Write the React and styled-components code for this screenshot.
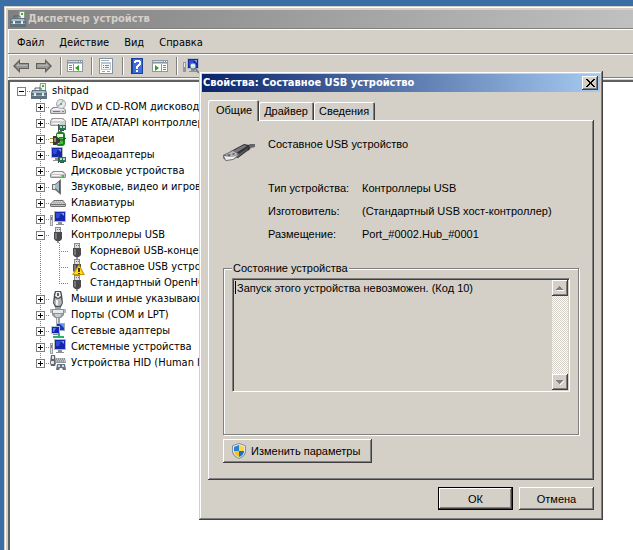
import { useState } from 'react'
import styled, { createGlobalStyle, css } from 'styled-components'

const colors = {
    desktop: '#3a6ea5',
    face: '#d4d0c8',
    light: '#ffffff',
    shadow: '#808080',
    dark: '#404040',
}

const uiFont = '"DejaVu Sans Condensed", "DejaVu Sans", Tahoma, sans-serif'
const dialogFont = '"Liberation Sans", Arial, sans-serif'

const raised = css`
    box-shadow: inset -1px -1px ${colors.dark}, inset 1px 1px ${colors.light}, inset -2px -2px ${colors.shadow};
`

const treeItems = [
    { level: 0, icon: 'case', text: 'shitpad', box: 'minus' },
    { level: 1, icon: 'dvd', text: 'DVD и CD-ROM дисководы', box: 'plus' },
    { level: 1, icon: 'ide', text: 'IDE ATA/ATAPI контроллеры', box: 'plus' },
    { level: 1, icon: 'battery', text: 'Батареи', box: 'plus' },
    { level: 1, icon: 'video', text: 'Видеоадаптеры', box: 'plus' },
    { level: 1, icon: 'disk', text: 'Дисковые устройства', box: 'plus' },
    { level: 1, icon: 'sound', text: 'Звуковые, видео и игровые устройства', box: 'plus' },
    { level: 1, icon: 'keyboard', text: 'Клавиатуры', box: 'plus' },
    { level: 1, icon: 'computer', text: 'Компьютер', box: 'plus' },
    { level: 1, icon: 'usb', text: 'Контроллеры USB', box: 'minus' },
    { level: 2, icon: 'usb', text: 'Корневой USB-концентратор' },
    { level: 2, icon: 'usbWarning', text: 'Составное USB устройство' },
    { level: 2, icon: 'usb', text: 'Стандартный OpenHCD USB хост-контроллер', last: true },
    { level: 1, icon: 'mouse', text: 'Мыши и иные указывающие устройства', box: 'plus' },
    { level: 1, icon: 'port', text: 'Порты (COM и LPT)', box: 'plus' },
    { level: 1, icon: 'network', text: 'Сетевые адаптеры', box: 'plus' },
    { level: 1, icon: 'computer', text: 'Системные устройства', box: 'plus' },
    { level: 1, icon: 'hid', text: 'Устройства HID (Human Interface Devices)', box: 'plus', last: true },
]

const Drive = () => <>
    <path d="M3 8h10l3 3v3l-1 1H1l-1-1v-3z" fill="#8c8c8c" />
    <path d="M4 9h8l3 2H1z" fill="#f2f2f2" />
    <path d="M1 11h14v3H1z" fill="#c6c6c6" />
    <path d="M2 12h8v1H2z" fill="#f5f5f5" />
    <path d="M12 12h2v2h-2z" fill="#35c425" />
</>

const Card = () => <>
    <path d="M8 10h8v5H8z" fill="#1c7a55" />
    <path d="M10 11h2v2h-2zM13 11h2v2h-2z" fill="#b9dccb" />
    <path d="M8 9h1v7H8zM10 15h4v1h-4z" fill="#3f4f47" />
</>

const Plug = () => <>
    <path d="M5 0h6v5H5z" fill="#8b8b8b" />
    <path d="M6 1h4v4H6z" fill="#dedede" />
    <path d="M7 2h1v1H7zM9 2h1v1H9z" fill="#777" />
    <path d="M4 5h8v7l-2 2H6l-2-2z" fill="#4b4b4d" />
    <path d="M5 6h2v6H5z" fill="#77777c" />
    <path d="M7 14h2v2H7z" fill="#8f8f8f" />
</>

const Monitor = () => <>
    <path d="M4 0h12v11H4z" fill="#b5b9bd" />
    <path d="M5 1h10v9H5z" fill="#1426ae" />
    <path d="M6 2h5l-2 5H6z" fill="#2f4cd2" />
    <path d="M11 2h3v3z" fill="#829af4" />
    <path d="M8 11h4v2h2v1H6v-1h2z" fill="#8d9195" />
</>

const WindowPane = () => <>
    <path d="M0 2h16v12H0z" fill="#8b98a4" />
    <path d="M1 5h14v8H1z" fill="#fff" />
    <path d="M1 3h10v1H1z" fill="#c9dcec" />
    <path d="M12 3h1v1h-1zM14 3h1v1h-1z" fill="#fff" />
    <path d="M1 5h14v1H1z" fill="#b9c6d0" />
</>

const glyphs = {
    case: <>
        <path d="M9 0h6v8H8z" fill="#8d9b8c" />
        <path d="M10 1h4v6H9z" fill="#eef5ea" />
        <path d="M11 2h2v2h-2z" fill="#37b427" />
        <path d="M4 7V5h6v2" fill="none" stroke="#53626b" />
        <path d="M1 7h14l1 3v6H0v-6z" fill="#5e717d" />
        <path d="M2 8h12l1 2H1z" fill="#a9bbc5" />
        <path d="M1 12h14v1H1z" fill="#91a4af" />
        <path d="M3 10h2v3H3zM11 10h2v3h-2z" fill="#e6edf0" />
    </>,
    dvd: <>
        <Drive />
        <circle cx="11" cy="5" r="5" fill="#a4a8ad" />
        <circle cx="11" cy="5" r="4" fill="#e5e8ec" />
        <path d="M11 5l1-4 2 1z" fill="#8fcf8a" />
        <path d="M11 5L8 8 7 6z" fill="#b2a4d5" />
        <circle cx="11" cy="5" r="1" fill="#777" />
        <path d="M1 11h14v3H1z" fill="#d4d4d4" />
        <path d="M3 12h7v1H3z" fill="#777" />
        <path d="M12 12h2v1h-2z" fill="#35c425" />
    </>,
    ide: <>
        <path d="M2 3h11l3 3v4l-1 1H1l-1-1V6z" fill="#999" />
        <path d="M3 4h9l3 2H1z" fill="#f2f2f2" />
        <path d="M1 6h14v4H1z" fill="#d0d0d0" />
        <path d="M2 8h8v1H2z" fill="#f7f7f7" />
        <Card />
    </>,
    battery: <>
        <path d="M8 0h4v2H8z" fill="#777" />
        <rect x="6" y="1" width="9" height="14" rx="3" fill="#17811d" />
        <path d="M7 3h2v10H7z" fill="#d6f2cf" />
        <path d="M9 3h4v3H9z" fill="#eef6eb" />
        <path d="M9 7h4v6H9z" fill="#3cc138" />
        <path d="M0 7h4v1H0zM0 11h4v1H0z" fill="#a88c35" />
        <path d="M3 5h3l4 3v3l-4 3H3z" fill="#3a3932" />
        <path d="M4 7h2v4H4z" fill="#8d8a77" />
        <path d="M9 9h4l3-2" fill="none" stroke="#33332b" />
    </>,
    video: <>
        <g transform="translate(-3 0)"><Monitor /></g>
        <Card />
    </>,
    disk: <Drive />,
    sound: <>
        <path d="M2 5h3l6-5v16l-6-5H2z" fill="#6c777d" />
        <path d="M5 6l5-4v11l-5-4z" fill="#aeb9be" />
        <path d="M3 6h2v4H3z" fill="#dce2e5" />
        <path d="M9 2h1v12H9z" fill="#4f595f" />
    </>,
    keyboard: <>
        <path d="M4 5h9l3 4v2l-1 1H1l-1-1V9z" fill="#6f6f6f" />
        <path d="M4 6h9l2 3H1z" fill="#dcdcdc" />
        <path d="M4 7h9M3 8h11" stroke="#8e8e8e" strokeDasharray="1 1" />
        <path d="M1 10h14v1H1z" fill="#c4c4c4" />
    </>,
    computer: <>
        <Monitor />
        <path d="M0 4h3v11H0z" fill="#9ba1a4" />
        <path d="M1 5h1v9H1z" fill="#dfe3e4" />
        <path d="M1 6h1v3H1z" fill="#36b829" />
    </>,
    usb: <Plug />,
    usbWarning: <>
        <Plug />
        <path d="M10 5l6 11H3z" fill="#c99800" />
        <path d="M10 7l4 8H5z" fill="#ffdf20" />
        <path d="M9 9h2v4H9zM9 14h2v1H9z" fill="#493600" />
    </>,
    mouse: <>
        <path d="M5 0h6l1 3 1 9-2 4H5l-2-4 1-9z" fill="#4c4f52" />
        <path d="M6 1h4l1 4-3 2-3-2z" fill="#eceeef" />
        <path d="M7 2h2v3H7z" fill="#5f6265" />
        <path d="M5 7l3 1 3-1 1 5-2 3H6l-2-3z" fill="#b4b8bb" />
        <path d="M6 9h2v5H6z" fill="#f4f4f4" />
    </>,
    port: <>
        <path d="M5 0h6v3H5z" fill="#9aa0a3" />
        <path d="M0 2h3v4H0zM13 2h3v4h-3z" fill="#b3b9bc" />
        <path d="M2 2h12v6l-3 3H5L2 8z" fill="#8b9397" />
        <path d="M3 3h10v3H3z" fill="#e7eaec" />
        <path d="M4 7h8l-2 3H6z" fill="#c7cdd0" />
        <path d="M6 11h4v5H6z" fill="#98a0a4" />
        <path d="M7 11h1v5H7z" fill="#e7eaec" />
    </>,
    network: <>
        <path d="M6 0h9v8H6z" fill="#9eabb5" />
        <path d="M7 1h7v6H7z" fill="#1a36c4" />
        <path d="M10 1h4v4z" fill="#6893fa" />
        <path d="M1 3h9v8H1z" fill="#bcc7ce" />
        <path d="M2 4h7v6H2z" fill="#1526ac" />
        <path d="M3 5h3l-2 4H3z" fill="#547df2" />
        <path d="M3 11h5v1H3z" fill="#858d93" />
        <path d="M8 10h2v3h4v2H3v-2h5z" fill="#27b36a" />
    </>,
    hid: <>
        <path d="M1 0h4l1 8-1 3H1L0 8z" fill="#62676b" />
        <path d="M2 1h2v3H2zM1 6h3v3H1z" fill="#e1e4e6" />
        <path d="M6 3h9l1 5H5z" fill="#8e9498" />
        <path d="M7 4h8M6 6h9" stroke="#e8ebed" strokeDasharray="1 1" />
        <path d="M7 9h8l1 6h-3l-1-2h-2l-1 2H6z" fill="#637284" />
        <path d="M8 10h2v2H8zM12 10h2v2h-2z" fill="#cdd8e4" />
    </>,
    back: <>
        <path d="M0 8l7-7v4h9v6H7v4z" fill="#5f5f5f" />
        <path d="M2 8l4-4v2h9v4H6v2z" fill="#989896" />
        <path d="M3 8l3-3v2h8v1z" fill="#b5b4b1" />
    </>,
    forward: <>
        <path d="M16 8L9 1v4H0v6h9v4z" fill="#5f5f5f" />
        <path d="M14 8l-4-4v2H1v4h9v2z" fill="#989896" />
        <path d="M13 8l-3-3v2H2v1z" fill="#b5b4b1" />
    </>,
    showTree: <>
        <WindowPane />
        <path d="M6 6h1v7H6z" fill="#8b98a4" />
        <path d="M2 7h3v1H2zM2 9h3v1H2zM2 11h3v1H2z" fill="#668ba7" />
        <path d="M12 7v6L8 10z" fill="#2aa51c" />
    </>,
    properties: <>
        <path d="M1 0h14v16H1z" fill="#8794a0" />
        <path d="M2 1h12v14H2z" fill="#fff" />
        <path d="M3 2h8v1H3z" fill="#9dafbd" />
        <path d="M3 4h10v8H3z" fill="#bac7d1" />
        <path d="M4 6h8v5H4z" fill="#f5f8fa" />
        <path d="M5 7h1v1H5zM5 9h1v1H5z" fill="#2d8ac0" />
        <path d="M7 7h4v1H7zM7 9h4v1H7z" fill="#778896" />
        <path d="M4 13h3v1H4zM9 13h3v1H9z" fill="#45c4e2" />
    </>,
    help: <>
        <path d="M2 0h12v16H2z" fill="#1b3f9e" />
        <path d="M4 1h9v14H4z" fill="#3e6ede" />
        <path d="M5 5V3h1V2h5v1h1v4h-1v1h-1v1H9v2H7V8h1V7h1V6h1V4H7v1zM7 12h2v2H7z" fill="#fff" />
    </>,
    action: <>
        <WindowPane />
        <path d="M9 6h1v7H9z" fill="#8b98a4" />
        <path d="M11 7h3v1h-3zM11 9h3v1h-3zM11 11h3v1h-3z" fill="#668ba7" />
        <path d="M3 7v6l4-3z" fill="#2aa51c" />
    </>,
    scan: <>
        <Monitor />
        <path d="M0 4h3v10H0z" fill="#8f999f" />
        <path d="M1 5h1v4H1z" fill="#e8efe7" />
        <circle cx="10" cy="8" r="3" fill="#c9e7f7" stroke="#5d7584" />
        <path d="M8 7h3v1H8z" fill="#fff" />
        <path d="M12 10l4 5" stroke="#777b80" strokeWidth="2" />
    </>,
    shield: <>
        <path d="M8 0l6 2 1 1v5c0 4-3 6-7 8-4-2-7-4-7-8V3l1-1z" fill="#858e98" />
        <path d="M8 1l6 2v5c0 3-2 5-6 7-4-2-6-4-6-7V3z" fill="#e3e7eb" />
        <path d="M8 2v6H3V4z" fill="#2582d6" />
        <path d="M8 2l5 2v4H8z" fill="#ffd53c" />
        <path d="M3 8h5v6c-3-1-5-3-5-6z" fill="#f5c41c" />
        <path d="M8 8h5c0 3-2 5-5 6z" fill="#1872ca" />
    </>,
}

function Icon({ name }) {
    return <Glyph viewBox="0 0 16 16" aria-hidden="true">{glyphs[name]}</Glyph>
}

function TreeRow({ item }) {
    return <Row role="treeitem" aria-level={item.level + 1}>
        {item.level > 0 && <Rail />}
        {item.level === 2 && <Rail $line />}
        <Rail $line={item.level > 0} $branch $end={item.last}>
            {item.box && <Expander aria-label={item.text} $plus={item.box === 'plus'} />}
        </Rail>
        <Icon name={item.icon} />
        <RowText>{item.text}</RowText>
    </Row>
}

function PropertiesDialog() {
    const [tab, setTab] = useState('Общие')
    return <Dialog role="dialog" aria-labelledby="dialog-title">
        <DialogTitle>
            <h2 id="dialog-title">Свойства: Составное USB устройство</h2>
            <CloseButton aria-label="Закрыть">
                <svg width="9" height="8" viewBox="0 0 9 8" shapeRendering="crispEdges">
                    <path d="M0 0h2v1h1v1h1v1h1V2h1V1h1V0h2v1H8v1H7v1H6v2h1v1h1v1h1v1H7V7H6V6H5V5H4v1H3v1H2v1H0V7h1V6h1V5h1V3H2V2H1V1H0z" />
                </svg>
            </CloseButton>
        </DialogTitle>
        <Tabs role="tablist">
            {['Общие', 'Драйвер', 'Сведения'].map(name =>
                <Tab key={name} role="tab" aria-selected={tab === name} $active={tab === name} onClick={() => setTab(name)}>
                    {name}
                </Tab>
            )}
        </Tabs>
        <TabPanel role="tabpanel">
            <DeviceHeader>
                <UsbDrawing />
                <span>Составное USB устройство</span>
            </DeviceHeader>
            <DeviceInfo>
                <dt>Тип устройства:</dt>
                <dd>Контроллеры USB</dd>
                <dt>Изготовитель:</dt>
                <dd>(Стандартный USB хост-контроллер)</dd>
                <dt>Размещение:</dt>
                <dd>Port_#0002.Hub_#0001</dd>
            </DeviceInfo>
            <StatusGroup>
                <legend id="status-label">Состояние устройства</legend>
                <StatusBox>
                    <textarea
                        aria-labelledby="status-label"
                        readOnly
                        value="Запуск этого устройства невозможен. (Код 10)"
                    />
                    <ScrollBar>
                        <ScrollButton aria-label="Вверх" disabled>
                            <svg width="8" height="5" viewBox="0 0 8 5" shapeRendering="crispEdges">
                                <path d="M1 4h7v1H1z" fill="#fff" />
                                <path d="M3 0h1v1h1v1h1v1h1v1H0V3h1V2h1V1h1z" fill="#808080" />
                            </svg>
                        </ScrollButton>
                        <ScrollButton aria-label="Вниз" disabled>
                            <svg width="8" height="5" viewBox="0 0 8 5" shapeRendering="crispEdges">
                                <path d="M8 1v1H7v1H6v1H5v1H4V4l3-3z" fill="#fff" />
                                <path d="M0 0h7v1H6v1H5v1H4v1H3V3H2V2H1V1H0z" fill="#808080" />
                            </svg>
                        </ScrollButton>
                    </ScrollBar>
                </StatusBox>
            </StatusGroup>
            <SettingsButton>
                <Icon name="shield" />
                Изменить параметры
            </SettingsButton>
        </TabPanel>
        <DialogButtons>
            <PushButton $primary>ОК</PushButton>
            <PushButton>Отмена</PushButton>
        </DialogButtons>
    </Dialog>
}

function UsbDrawing() {
    return <svg width="32" height="32" viewBox="0 0 32 32" aria-hidden="true">
        <path d="M22 10l5-3h5v3l-4 1-3 3z" fill="#66666a" />
        <path d="M8 14l13-7 5 1 1 4-12 9-5-1z" fill="#343438" />
        <path d="M10 14l11-6 3 1-11 7z" fill="#77777e" />
        <path d="M14 18l11-7v1l-10 8z" fill="#5a5a61" />
        <path d="M0 18l10-5 6 4v2l-6 4-7 1-3-3z" fill="#6c6c70" />
        <path d="M2 18l8-4 5 3-6 3z" fill="#b7b7bb" />
        <path d="M1 19l8 1 6-2-5 4-7 1z" fill="#f0f0f2" />
        <path d="M4 18l2-1 2 1-2 1zM9 17l2-1 1 1-2 1z" fill="#505055" />
    </svg>
}

export default function App() {
    return <>
        <GlobalStyle />
        <Desktop>
            <ManagerWindow>
                <TitleBar>
                    <Icon name="case" />
                    <h1>Диспетчер устройств</h1>
                </TitleBar>
                <MenuBar>
                    {['Файл', 'Действие', 'Вид', 'Справка'].map(name => <MenuItem key={name}>{name}</MenuItem>)}
                </MenuBar>
                <ToolBar>
                    <ToolButton aria-label="Назад"><Icon name="back" /></ToolButton>
                    <ToolButton aria-label="Вперед"><Icon name="forward" /></ToolButton>
                    <Separator />
                    <ToolButton aria-label="Дерево консоли"><Icon name="showTree" /></ToolButton>
                    <Separator />
                    <ToolButton aria-label="Свойства"><Icon name="properties" /></ToolButton>
                    <Separator />
                    <ToolButton aria-label="Справка"><Icon name="help" /></ToolButton>
                    <ToolButton aria-label="Панель действий"><Icon name="action" /></ToolButton>
                    <Separator />
                    <ToolButton aria-label="Обновить конфигурацию"><Icon name="scan" /></ToolButton>
                </ToolBar>
                <TreeFrame>
                    <Tree role="tree">
                        {treeItems.map((item, i) => <TreeRow key={i} item={item} />)}
                    </Tree>
                </TreeFrame>
            </ManagerWindow>
            <PropertiesDialog />
        </Desktop>
    </>
}

const GlobalStyle = createGlobalStyle`
    * {
        box-sizing: border-box;
    }

    body {
        margin: 0;
        overflow: hidden;
        background: ${colors.desktop};
        font: 11px/14px ${uiFont};
        color: #000;
    }

    button {
        margin: 0;
        padding: 0;
        border: 0;
        background: ${colors.face};
        font: inherit;
        color: inherit;
    }

    h1, h2 {
        margin: 0;
        font-size: 11px;
        font-weight: bold;
        white-space: nowrap;
    }
`

const Desktop = styled.main`
    position: relative;
    min-height: 100vh;
    display: flex;
    padding: 6px 0 0 4px;
`

const ManagerWindow = styled.section`
    flex: 1;
    min-width: 0;
    display: flex;
    flex-direction: column;
    padding: 4px 0 0 4px;
    background: ${colors.face};
    box-shadow: inset 1px 1px ${colors.face}, inset 2px 2px ${colors.light};
`

const Glyph = styled.svg`
    flex: none;
    width: 16px;
    height: 16px;
    display: block;
`

const TitleBar = styled.header`
    display: flex;
    align-items: center;
    gap: 2px;
    height: 18px;
    padding-left: 2px;
    background: linear-gradient(to right, #808080, #c0c0c0);
    color: ${colors.face};
`

const etched = css`
    border-top: 1px solid ${colors.shadow};
    box-shadow: inset 1px 1px ${colors.light};
`

const MenuBar = styled.nav`
    ${etched}
    display: flex;
    align-items: center;
    gap: 15px;
    height: 25px;
    padding: 3px 0 0 9px;
`

const MenuItem = styled.button`
    background: none;
`

const ToolBar = styled.div`
    ${etched}
    display: flex;
    align-items: center;
    height: 24px;
    padding: 1px 0 0 2px;
`

const ToolButton = styled.button`
    display: flex;
    width: 23px;
    padding: 3px;
    background: none;
`

const Separator = styled.span`
    width: 2px;
    height: 18px;
    margin: 0 2px 0 4px;
    border-left: 1px solid ${colors.shadow};
    border-right: 1px solid ${colors.light};
`

const TreeFrame = styled.div`
    ${etched}
    flex: 1;
    display: flex;
    padding-top: 2px;
`

const Tree = styled.ul`
    flex: 1;
    min-width: 0;
    margin: 0;
    padding: 1px 0 0 2px;
    list-style: none;
    background: #fff;
    border-top: 2px solid ${colors.dark};
    border-left: 2px solid ${colors.dark};
    border-color: #606060;
`

const Row = styled.li`
    display: flex;
    align-items: center;
    height: 16px;
    white-space: nowrap;
`

const dots = direction => `repeating-linear-gradient(${direction}, #808080 0 1px, transparent 1px 2px)`

const Rail = styled.span`
    flex: none;
    width: 19px;
    height: 16px;
    display: flex;
    align-items: center;
    justify-content: center;
    background-image: ${p => p.$line ? dots('to bottom') : 'none'}, ${p => p.$branch ? dots('to right') : 'none'};
    background-size: 1px ${p => p.$end ? '8px' : '16px'}, 10px 1px;
    background-position: 9px 0, 9px 8px;
    background-repeat: no-repeat;
`

const Expander = styled.button`
    width: 9px;
    height: 9px;
    margin-top: 1px;
    border: 1px solid ${colors.shadow};
    background:
        linear-gradient(#000, #000) center / 5px 1px no-repeat,
        linear-gradient(#000, #000) center / 1px ${p => p.$plus ? '5px' : '0'} no-repeat,
        #fff;
`

const RowText = styled.span`
    margin-left: 5px;
`

const Dialog = styled.section`
    position: absolute;
    top: 71px;
    left: 199px;
    right: 30px;
    padding: 3px 3px 10px;
    background: ${colors.face};
    box-shadow: inset -1px -1px ${colors.dark}, inset 1px 1px ${colors.face}, inset -2px -2px ${colors.shadow}, inset 2px 2px ${colors.light};
    font-family: ${dialogFont};
`

const DialogTitle = styled.header`
    display: flex;
    align-items: center;
    justify-content: space-between;
    height: 18px;
    padding: 0 2px 0 1px;
    background: linear-gradient(to right, #0a246a, #a6caf0);
    color: #fff;
    font-family: ${uiFont};
`

const CloseButton = styled.button`
    ${raised}
    display: flex;
    align-items: center;
    justify-content: center;
    width: 16px;
    height: 14px;
    color: #000;
`

const Tabs = styled.div`
    display: flex;
    align-items: flex-end;
    padding: 8px 6px 0;
`

const Tab = styled.button`
    height: ${p => p.$active ? '21px' : '18px'};
    padding: ${p => p.$active ? '0 7px 2px 8px' : '0 6px 0 5px'};
    margin-bottom: ${p => p.$active ? '-1px' : '0'};
    border-radius: 2px 2px 0 0;
    box-shadow: inset 1px 1px ${colors.light}, inset -1px 0 ${colors.dark}, inset -2px 0 ${colors.shadow};
    z-index: ${p => p.$active ? 1 : 0};
`

const TabPanel = styled.div`
    ${raised}
    display: flex;
    flex-direction: column;
    margin: 0 6px;
    padding: 17px 15px;
`

const DeviceHeader = styled.div`
    display: flex;
    gap: 13px;
`

const DeviceInfo = styled.dl`
    display: grid;
    grid-template-columns: 94px 1fr;
    grid-auto-rows: 23px;
    margin: 12px 0 0 45px;

    dd {
        margin: 0;
    }
`

const StatusGroup = styled.fieldset`
    min-width: 0;
    margin: 11px 0 0;
    padding: 3px 8px 42px;
    border: 1px solid ${colors.shadow};
    box-shadow: 1px 1px ${colors.light}, inset 1px 1px ${colors.light};

    legend {
        padding: 0 1px;
        background: ${colors.face};
    }
`

const StatusBox = styled.div`
    display: flex;
    height: 114px;
    border: 1px solid;
    border-color: ${colors.shadow} ${colors.light} ${colors.light} ${colors.shadow};
    box-shadow: inset 1px 1px ${colors.dark};
    padding: 1px;

    textarea {
        flex: 1;
        min-width: 0;
        padding: 1px 3px;
        border: 0;
        outline: 0;
        resize: none;
        overflow: hidden;
        /* resting caret */
        background: linear-gradient(#000, #000) 1px 1px / 1px 13px no-repeat;
        font: 11px/14px ${dialogFont};
        color: #000;
    }
`

const ScrollBar = styled.div`
    display: flex;
    flex-direction: column;
    justify-content: space-between;
    width: 16px;
    background: repeating-conic-gradient(#fff 0 25%, ${colors.face} 0 50%) 0 0 / 2px 2px;
`

const ScrollButton = styled.button`
    ${raised}
    display: flex;
    align-items: center;
    justify-content: center;
    height: 16px;
`

const SettingsButton = styled.button`
    ${raised}
    align-self: flex-start;
    display: flex;
    align-items: center;
    gap: 4px;
    height: 24px;
    margin-top: 4px;
    padding: 0 12px 0 8px;
`

const DialogButtons = styled.footer`
    display: flex;
    justify-content: flex-end;
    gap: 6px;
    margin: 7px 6px 0;
`

const PushButton = styled.button`
    ${raised}
    width: 75px;
    height: 23px;
    border: ${p => p.$primary ? '1px solid #000' : '0'};
`
